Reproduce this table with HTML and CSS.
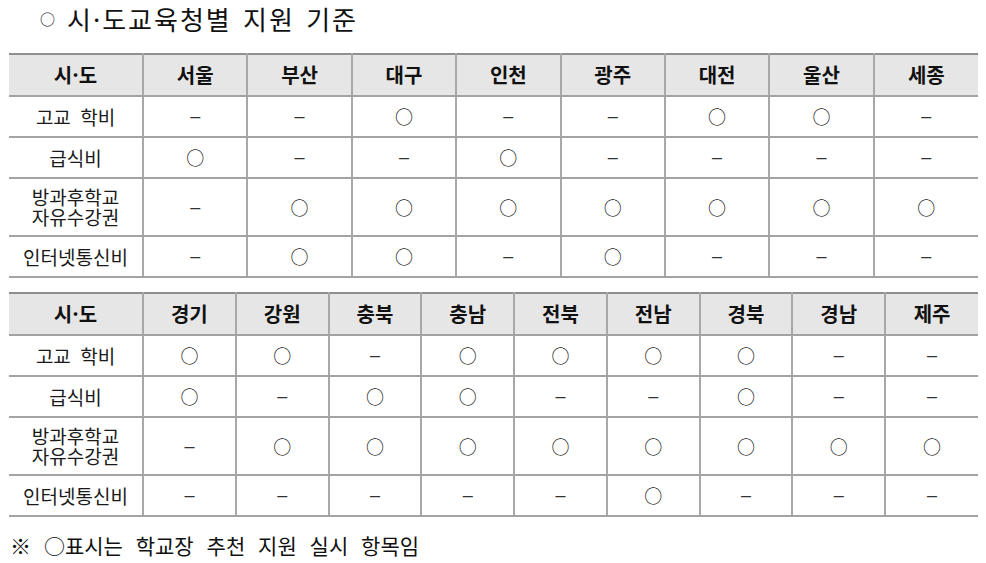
FILE: index.html
```html
<!DOCTYPE html>
<html lang="ko">
<head>
<meta charset="utf-8">
<link rel="stylesheet" href="styles.css">
</head>
<body>
<div class="page">
  <h1 class="title"><span class="bullet">○</span><span class="title-text">시·도교육청별 지원 기준</span></h1>

  <table class="grid grid-8">
    <colgroup><col class="c-first"><col><col><col><col><col><col><col><col></colgroup>
    <thead>
      <tr><th>시·도</th><th>서울</th><th>부산</th><th>대구</th><th>인천</th><th>광주</th><th>대전</th><th>울산</th><th>세종</th></tr>
    </thead>
    <tbody>
      <tr><td class="label">고교 학비</td><td class="d">–</td><td class="d">–</td><td class="o">○</td><td class="d">–</td><td class="d">–</td><td class="o">○</td><td class="o">○</td><td class="d">–</td></tr>
      <tr><td class="label">급식비</td><td class="o">○</td><td class="d">–</td><td class="d">–</td><td class="o">○</td><td class="d">–</td><td class="d">–</td><td class="d">–</td><td class="d">–</td></tr>
      <tr class="tall"><td class="label">방과후학교<br>자유수강권</td><td class="d">–</td><td class="o">○</td><td class="o">○</td><td class="o">○</td><td class="o">○</td><td class="o">○</td><td class="o">○</td><td class="o">○</td></tr>
      <tr><td class="label">인터넷통신비</td><td class="d">–</td><td class="o">○</td><td class="o">○</td><td class="d">–</td><td class="o">○</td><td class="d">–</td><td class="d">–</td><td class="d">–</td></tr>
    </tbody>
  </table>

  <table class="grid grid-9">
    <colgroup><col class="c-first"><col><col><col><col><col><col><col><col><col></colgroup>
    <thead>
      <tr><th>시·도</th><th>경기</th><th>강원</th><th>충북</th><th>충남</th><th>전북</th><th>전남</th><th>경북</th><th>경남</th><th>제주</th></tr>
    </thead>
    <tbody>
      <tr><td class="label">고교 학비</td><td class="o">○</td><td class="o">○</td><td class="d">–</td><td class="o">○</td><td class="o">○</td><td class="o">○</td><td class="o">○</td><td class="d">–</td><td class="d">–</td></tr>
      <tr><td class="label">급식비</td><td class="o">○</td><td class="d">–</td><td class="o">○</td><td class="o">○</td><td class="d">–</td><td class="d">–</td><td class="o">○</td><td class="d">–</td><td class="d">–</td></tr>
      <tr class="tall"><td class="label">방과후학교<br>자유수강권</td><td class="d">–</td><td class="o">○</td><td class="o">○</td><td class="o">○</td><td class="o">○</td><td class="o">○</td><td class="o">○</td><td class="o">○</td><td class="o">○</td></tr>
      <tr><td class="label">인터넷통신비</td><td class="d">–</td><td class="d">–</td><td class="d">–</td><td class="d">–</td><td class="d">–</td><td class="o">○</td><td class="d">–</td><td class="d">–</td><td class="d">–</td></tr>
    </tbody>
  </table>

  <p class="note">※ ○표시는 학교장 추천 지원 실시 항목임</p>
</div>
</body>
</html>
```

FILE: styles.css
```css
html, body {
  margin: 0;
  padding: 0;
  background: #ffffff;
}

body {
  font-family: "Noto Sans CJK KR", "Noto Sans", sans-serif;
  color: #111;
}

.page {
  padding: 0 8px 0 9px;
}

.title {
  margin: 0;
  height: 53px;
  display: flex;
  align-items: flex-start;
  padding-top: 1px;
  box-sizing: border-box;
  font-weight: normal;
  font-size: 26px;
  line-height: 36px;
}

.bullet {
  font-size: 15px;
  margin-left: 31px;
  width: 27px;
}

.title-text {
  letter-spacing: 2px;
  word-spacing: 2px;
}

.grid {
  border-collapse: collapse;
  table-layout: fixed;
  width: 969px;
}

.grid-8 {
  margin-bottom: 14px;
}

.c-first {
  width: 134px;
}

.grid th,
.grid td {
  text-align: center;
  vertical-align: middle;
  padding: 0;
  border-left: 2px solid #a8a8a8;
  border-right: 2px solid #a8a8a8;
  border-top: 2px solid #a3a3a3;
  border-bottom: 2px solid #a3a3a3;
}

.grid th:first-child,
.grid td:first-child {
  border-left: none;
}

.grid th:last-child,
.grid td:last-child {
  border-right: none;
}

.grid thead th {
  background: #e6e6e6;
  border-top: 2px solid #8f8f8f;
  font-size: 20px;
  font-weight: bold;
  height: 40px;
  line-height: 24px;
}

.grid tbody td {
  height: 39px;
  font-size: 18px;
  line-height: 21px;
}

.grid tbody tr.tall td {
  height: 56px;
}

.label {
  color: #1a1a1a;
  font-size: 19px;
  word-spacing: 4px;
}

.grid tbody td.label {
  font-size: 19px;
  line-height: 20px;
}

.d {
  font-family: "Liberation Sans", sans-serif;
  color: #333;
}

.o {
  font-size: 20px;
  color: #222;
}

.note {
  margin: 14px 0 0 1px;
  font-size: 21px;
  line-height: 28px;
  word-spacing: 7px;
}
```
